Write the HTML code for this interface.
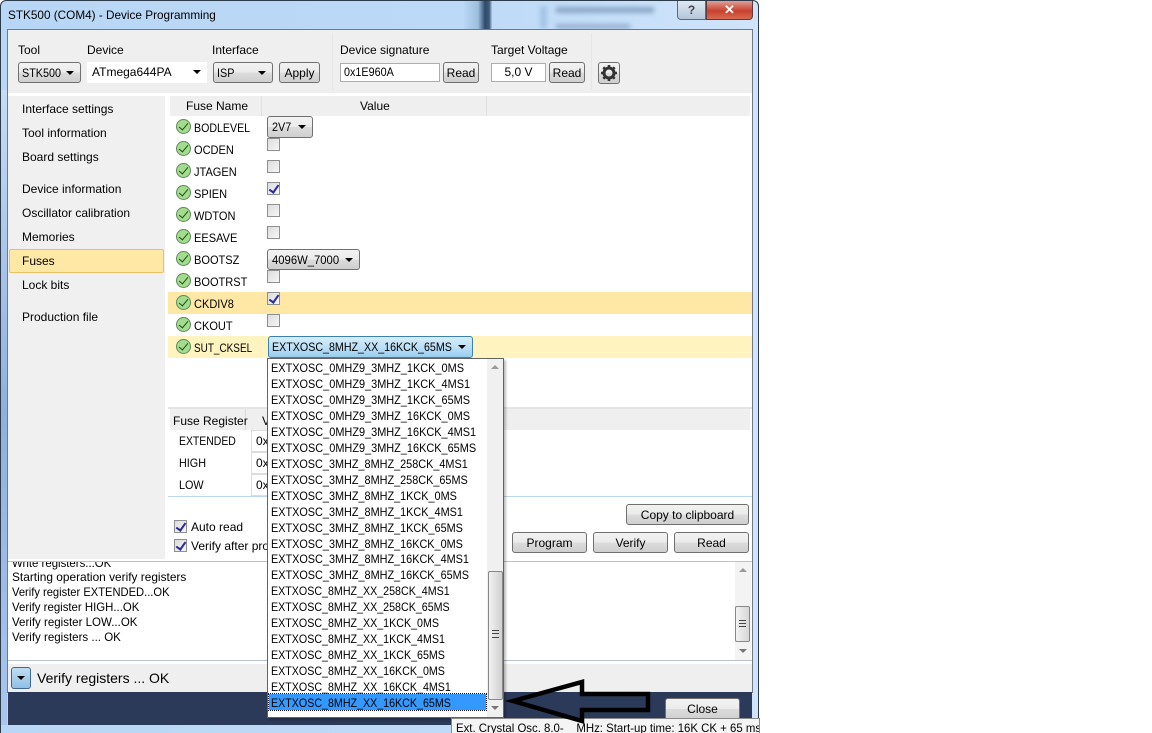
<!DOCTYPE html>
<html><head><meta charset="utf-8"><style>
html,body{margin:0;padding:0;background:#fff;width:1152px;height:733px;overflow:hidden}
*{box-sizing:border-box}
body{position:relative;font:12px/16px "Liberation Sans",sans-serif;color:#000}
.a,.t,.b,.c,.i,.cb{position:absolute}
.t{white-space:nowrap}
.b{border:1px solid #707070;border-radius:3px;background:linear-gradient(#f2f2f2 0,#ebebeb 50%,#dcdcdc 51%,#cfcfcf 100%);text-align:center;white-space:nowrap;line-height:20px}
.dd::after{content:"";position:absolute;right:6px;top:8px;border:4px solid transparent;border-top:4px solid #000;border-bottom:0}
.i{background:#fff;border:1px solid #abadb3;white-space:nowrap;line-height:17px}
.c{width:15px;height:15px;border-radius:50%;background:#a4dc8e;border:1px solid #5c8a5c}
.c::after{content:"";position:absolute;left:4px;top:1px;width:4px;height:8px;border:solid #1c4a1c;border-width:0 1.5px 1.5px 0;transform:rotate(40deg)}
.cb{width:13px;height:13px;border:1px solid #8e8f8f;background:linear-gradient(135deg,#dcdcdc,#f6f6f6)}
.cb.on::after{content:"";position:absolute;left:3px;top:0;width:4px;height:8px;border:solid #2b2b9a;border-width:0 2px 2px 0;transform:rotate(35deg)}
.op{left:3px;position:absolute;white-space:nowrap;line-height:16px;transform:scaleX(.91);transform-origin:0 0}
.op.m3{transform:scaleX(.905)}
.op.m8{transform:scaleX(.89)}
.s{display:inline-block;transform:scaleX(.9);transform-origin:0 0}
.t.s{display:block}
</style></head><body>
<div class="a" style="left:0;top:0;width:759px;height:733px;background:linear-gradient(90deg,#b8d6f5,#bcd9f7 60%,#cfe4fa);border:1px solid #2c3a4a;border-top-left-radius:6px;border-top-right-radius:6px;border-bottom:0"></div>
<div class="a" style="left:1px;top:90px;width:6px;height:640px;background:linear-gradient(#c5dcf5,#8fb0e0 50%,#aac6ee)"></div>
<div class="a" style="left:464px;top:1px;width:28px;height:28px;background:linear-gradient(90deg,#b8d6f5,#9fbfe0 50%,#2f4a6c 75%,#3d5a7a 90%,#b0cdea)"></div>
<div class="a" style="left:540px;top:6px;width:7px;height:22px;background:#a5c4e6;filter:blur(2px)"></div>
<div class="a" style="left:556px;top:7px;width:98px;height:6px;background:#8ba8c8;filter:blur(2.5px)"></div>
<div class="a" style="left:556px;top:24px;width:74px;height:5px;background:#94b0d0;filter:blur(2.5px)"></div>
<div class="t" style="left:8px;top:7px;transform:scaleX(.98);transform-origin:0 0">STK500 (COM4) - Device Programming</div>
<div class="a" style="left:677px;top:1px;width:29px;height:19px;background:linear-gradient(#dfe9f3,#b4c6d8);border:1px solid #5a6a7a;border-top:0;border-radius:0 0 0 4px;text-align:center;line-height:19px;color:#445;font-weight:bold">?</div>
<div class="a" style="left:706px;top:1px;width:47px;height:19px;background:linear-gradient(#e0a095,#c8402e 55%,#d86a50);border:1px solid #5a3a3a;border-top:0;border-radius:0 0 4px 0;text-align:center;line-height:18px;color:#fff;font-weight:bold;font-size:13px">✕</div>

<div class="a" style="left:7px;top:29px;width:746px;height:664px;background:#fff;border:1px solid #6f7a86"></div>
<div class="a" style="left:8px;top:30px;width:744px;height:63px;background:#efefef"></div>
<div class="a" style="left:332px;top:33px;width:1px;height:57px;background:#e6e6e6"></div>
<div class="a" style="left:591px;top:33px;width:1px;height:57px;background:#e6e6e6"></div>

<div class="t" style="left:18px;top:42px">Tool</div>
<div class="t" style="left:87px;top:42px">Device</div>
<div class="t" style="left:212px;top:42px">Interface</div>
<div class="t" style="left:340px;top:42px">Device signature</div>
<div class="t" style="left:491px;top:42px">Target Voltage</div>
<div class="b dd" style="left:18px;top:62px;width:63px;height:21px;text-align:left;padding-left:3px"><span class="s">STK500</span></div>
<div class="a dd" style="left:87px;top:62px;width:120px;height:21px;background:#fff;line-height:20px;padding-left:5px">ATmega644PA</div>
<div class="b dd" style="left:213px;top:62px;width:60px;height:21px;text-align:left;padding-left:3px"><span class="s">ISP</span></div>
<div class="b" style="left:279px;top:62px;width:41px;height:21px">Apply</div>
<div class="i" style="left:340px;top:63px;width:100px;height:19px;padding-left:3px"><span class="s">0x1E960A</span></div>
<div class="b" style="left:443px;top:62px;width:36px;height:21px">Read</div>
<div class="i" style="left:491px;top:63px;width:55px;height:19px;text-align:center">5,0 V</div>
<div class="b" style="left:549px;top:62px;width:36px;height:21px">Read</div>
<div class="b" style="left:598px;top:62px;width:22px;height:22px">
<svg width="20" height="20" viewBox="0 0 20 20" style="position:absolute;left:0;top:0"><circle cx="10" cy="10" r="5" fill="none" stroke="#333" stroke-width="3"/><path d="M10 2v16M2 10h16M4.3 4.3l11.4 11.4M15.7 4.3L4.3 15.7" stroke="#333" stroke-width="2.6" stroke-dasharray="3 10 3 0"/></svg></div>

<div class="a" style="left:8px;top:96px;width:157px;height:463px;background:#f0f0f0"></div>
<div class="t" style="left:22px;top:101px">Interface settings</div>
<div class="t" style="left:22px;top:125px">Tool information</div>
<div class="t" style="left:22px;top:149px">Board settings</div>
<div class="t" style="left:22px;top:181px">Device information</div>
<div class="t" style="left:22px;top:205px">Oscillator calibration</div>
<div class="t" style="left:22px;top:229px">Memories</div>
<div class="a" style="left:9px;top:249px;width:155px;height:24px;background:#ffe8a6;border:1px solid #e5c365;border-radius:2px"></div>
<div class="t" style="left:22px;top:253px">Fuses</div>
<div class="t" style="left:22px;top:277px">Lock bits</div>
<div class="t" style="left:22px;top:309px">Production file</div>

<div class="a" style="left:170px;top:96px;width:580px;height:20px;background:#efefef"></div>
<div class="a" style="left:261px;top:96px;width:1px;height:20px;background:#e0e0e0"></div>
<div class="a" style="left:486px;top:96px;width:1px;height:20px;background:#e0e0e0"></div>
<div class="t" style="left:186px;top:98px">Fuse Name</div>
<div class="t" style="left:360px;top:98px">Value</div>

<div class="a" style="left:168px;top:292px;width:584px;height:22px;background:#ffe8a6"></div>
<div class="a" style="left:168px;top:336px;width:584px;height:22px;background:#fff3c0"></div>

<div class="c" style="left:176px;top:119px"></div><div class="t s" style="left:194px;top:120px;transform:scaleX(.885)">BODLEVEL</div>
<div class="c" style="left:176px;top:141px"></div><div class="t s" style="left:194px;top:142px;transform:scaleX(.92)">OCDEN</div>
<div class="c" style="left:176px;top:163px"></div><div class="t s" style="left:194px;top:164px;transform:scaleX(.92)">JTAGEN</div>
<div class="c" style="left:176px;top:185px"></div><div class="t s" style="left:194px;top:186px;transform:scaleX(.92)">SPIEN</div>
<div class="c" style="left:176px;top:207px"></div><div class="t s" style="left:194px;top:208px;transform:scaleX(.92)">WDTON</div>
<div class="c" style="left:176px;top:229px"></div><div class="t s" style="left:194px;top:230px;transform:scaleX(.92)">EESAVE</div>
<div class="c" style="left:176px;top:251px"></div><div class="t s" style="left:194px;top:252px;transform:scaleX(.92)">BOOTSZ</div>
<div class="c" style="left:176px;top:273px"></div><div class="t s" style="left:194px;top:274px;transform:scaleX(.92)">BOOTRST</div>
<div class="c" style="left:176px;top:295px"></div><div class="t s" style="left:194px;top:296px;transform:scaleX(.92)">CKDIV8</div>
<div class="c" style="left:176px;top:317px"></div><div class="t s" style="left:194px;top:318px;transform:scaleX(.92)">CKOUT</div>
<div class="c" style="left:176px;top:339px"></div><div class="t s" style="left:194px;top:340px;transform:scaleX(.83)">SUT_CKSEL</div>

<div class="b dd" style="left:267px;top:116px;width:46px;height:22px;text-align:left;padding-left:4px"><span class="s">2V7</span></div>
<div class="cb" style="left:267px;top:138px"></div>
<div class="cb" style="left:267px;top:160px"></div>
<div class="cb on" style="left:267px;top:182px"></div>
<div class="cb" style="left:267px;top:204px"></div>
<div class="cb" style="left:267px;top:226px"></div>
<div class="b dd" style="left:267px;top:249px;width:93px;height:21px;text-align:left;padding-left:4px"><span class="s" style="transform:scaleX(.94)">4096W_7000</span></div>
<div class="cb" style="left:267px;top:270px"></div>
<div class="cb on" style="left:267px;top:292px"></div>
<div class="cb" style="left:267px;top:314px"></div>
<div class="b dd" style="left:268px;top:336px;width:205px;height:22px;text-align:left;padding-left:3px;background:linear-gradient(#d6ecfa,#bde0f6 50%,#98cdef);border-color:#3c7fb1"><span class="s" style="transform:scaleX(.89)">EXTXOSC_8MHZ_XX_16KCK_65MS</span></div>

<div class="a" style="left:168px;top:407px;width:584px;height:2px;background:#e4e4e4"></div>
<div class="a" style="left:170px;top:409px;width:580px;height:21px;background:#efefef"></div>
<div class="a" style="left:245px;top:409px;width:1px;height:21px;background:#d8d8d8"></div>
<div class="t" style="left:173px;top:413px">Fuse Register</div>
<div class="t" style="left:262px;top:413px">V</div>
<div class="t s" style="left:179px;top:433px;transform:scaleX(.87)">EXTENDED</div>
<div class="t s" style="left:179px;top:455px">HIGH</div>
<div class="t s" style="left:179px;top:477px">LOW</div>
<div class="i" style="left:251px;top:430px;width:100px;height:22px;padding-left:4px;line-height:21px;border-color:#ddd">0x</div>
<div class="i" style="left:251px;top:452px;width:100px;height:22px;padding-left:4px;line-height:21px;border-color:#ddd">0x</div>
<div class="i" style="left:251px;top:474px;width:100px;height:22px;padding-left:4px;line-height:21px;border-color:#ddd">0x</div>
<div class="a" style="left:168px;top:496px;width:584px;height:1px;background:#bdd6ee"></div>
<div class="cb on" style="left:174px;top:520px"></div>
<div class="t" style="left:191px;top:519px">Auto read</div>
<div class="cb on" style="left:174px;top:539px"></div>
<div class="t" style="left:191px;top:538px">Verify after programming</div>

<div class="b" style="left:626px;top:504px;width:123px;height:21px">Copy to clipboard</div>
<div class="b" style="left:512px;top:532px;width:75px;height:21px">Program</div>
<div class="b" style="left:593px;top:532px;width:75px;height:21px">Verify</div>
<div class="b" style="left:674px;top:532px;width:75px;height:21px">Read</div>

<div class="a" style="left:8px;top:561px;width:744px;height:100px;background:#fff;border-top:1px solid #b8c2cc;border-bottom:1px solid #b8c2cc;overflow:hidden"></div>
<div class="a" style="left:8px;top:562px;width:500px;height:98px;overflow:hidden"><div class="t" style="left:4px;top:-7px;transform:scaleX(.95);transform-origin:0 0">Write registers...OK</div></div>
<div class="t" style="left:12px;top:569px;transform:scaleX(.99);transform-origin:0 0">Starting operation verify registers</div>
<div class="t" style="left:12px;top:584px;transform:scaleX(.93);transform-origin:0 0">Verify register EXTENDED...OK</div>
<div class="t" style="left:12px;top:599px;transform:scaleX(.95);transform-origin:0 0">Verify register HIGH...OK</div>
<div class="t" style="left:12px;top:614px;transform:scaleX(.96);transform-origin:0 0">Verify register LOW...OK</div>
<div class="t" style="left:12px;top:629px;transform:scaleX(.96);transform-origin:0 0">Verify registers ... OK</div>
<div class="a" style="left:735px;top:562px;width:16px;height:98px;background:#f3f3f3"></div>
<div class="a" style="left:739px;top:568px;border:4px solid transparent;border-bottom:4px solid #999;border-top:0"></div>
<div class="a" style="left:739px;top:649px;border:4px solid transparent;border-top:4px solid #777;border-bottom:0"></div>
<div class="a" style="left:735px;top:606px;width:15px;height:36px;border:1px solid #888;border-radius:2px;background:linear-gradient(90deg,#f2f2f2,#d6d6d6)"></div>
<div class="a" style="left:739px;top:620px;width:7px;height:7px;border-top:1px solid #444;border-bottom:1px solid #444"></div>
<div class="a" style="left:739px;top:623px;width:7px;height:1px;background:#444"></div>

<div class="a" style="left:8px;top:664px;width:744px;height:28px;background:#efefef"></div>
<div class="b" style="left:11px;top:667px;width:20px;height:22px;background:linear-gradient(#c0dcf2,#90c0e6);border-color:#3c6a92"></div>
<div class="a" style="left:17px;top:676px;border:4px solid transparent;border-top:4px solid #000;border-bottom:0"></div>
<div class="t" style="left:37px;top:669px;font-size:14px;line-height:18px">Verify registers ... OK</div>
<div class="a" style="left:8px;top:692px;width:744px;height:33px;background:#2a3a58"></div>
<div class="b" style="left:665px;top:698px;width:75px;height:22px">Close</div>
<div class="a" style="left:1px;top:725px;width:757px;height:8px;background:linear-gradient(90deg,#b8d6f5,#c4dcf6)"></div>

<div class="a" style="left:267px;top:358px;width:237px;height:360px;background:#fff;border:1px solid #646464;box-shadow:2px 2px 2px rgba(0,0,0,.25);overflow:hidden">
<div class="a" style="left:219px;top:0;width:17px;height:358px;background:#f0f0f0"></div>
<div class="a" style="left:223px;top:6px;border:4px solid transparent;border-bottom:4px solid #999;border-top:0"></div>
<div class="a" style="left:223px;top:347px;border:4px solid transparent;border-top:4px solid #777;border-bottom:0"></div>
<div class="a" style="left:220px;top:212px;width:15px;height:129px;border:1px solid #888;border-radius:2px;background:linear-gradient(90deg,#f2f2f2,#d0d0d0)"></div>
<div class="a" style="left:224px;top:271px;width:7px;height:8px;border-top:1px solid #444;border-bottom:1px solid #444"></div>
<div class="a" style="left:224px;top:274px;width:7px;height:1px;background:#444"></div>
<div class="a" style="left:1px;top:335px;width:217px;height:16px;background:#3399ff;outline:1px dotted #114"></div>
<div class="op" style="top:1px">EXTXOSC_0MHZ9_3MHZ_1KCK_0MS</div>
<div class="op" style="top:17px">EXTXOSC_0MHZ9_3MHZ_1KCK_4MS1</div>
<div class="op" style="top:33px">EXTXOSC_0MHZ9_3MHZ_1KCK_65MS</div>
<div class="op" style="top:49px">EXTXOSC_0MHZ9_3MHZ_16KCK_0MS</div>
<div class="op" style="top:65px">EXTXOSC_0MHZ9_3MHZ_16KCK_4MS1</div>
<div class="op" style="top:81px">EXTXOSC_0MHZ9_3MHZ_16KCK_65MS</div>
<div class="op m3" style="top:97px">EXTXOSC_3MHZ_8MHZ_258CK_4MS1</div>
<div class="op m3" style="top:113px">EXTXOSC_3MHZ_8MHZ_258CK_65MS</div>
<div class="op m3" style="top:129px">EXTXOSC_3MHZ_8MHZ_1KCK_0MS</div>
<div class="op m3" style="top:145px">EXTXOSC_3MHZ_8MHZ_1KCK_4MS1</div>
<div class="op m3" style="top:161px">EXTXOSC_3MHZ_8MHZ_1KCK_65MS</div>
<div class="op m3" style="top:177px">EXTXOSC_3MHZ_8MHZ_16KCK_0MS</div>
<div class="op m3" style="top:192px">EXTXOSC_3MHZ_8MHZ_16KCK_4MS1</div>
<div class="op m3" style="top:208px">EXTXOSC_3MHZ_8MHZ_16KCK_65MS</div>
<div class="op m8" style="top:224px">EXTXOSC_8MHZ_XX_258CK_4MS1</div>
<div class="op m8" style="top:240px">EXTXOSC_8MHZ_XX_258CK_65MS</div>
<div class="op m8" style="top:256px">EXTXOSC_8MHZ_XX_1KCK_0MS</div>
<div class="op m8" style="top:272px">EXTXOSC_8MHZ_XX_1KCK_4MS1</div>
<div class="op m8" style="top:288px">EXTXOSC_8MHZ_XX_1KCK_65MS</div>
<div class="op m8" style="top:304px">EXTXOSC_8MHZ_XX_16KCK_0MS</div>
<div class="op m8" style="top:320px">EXTXOSC_8MHZ_XX_16KCK_4MS1</div>
<div class="op m8" style="top:336px">EXTXOSC_8MHZ_XX_16KCK_65MS</div>
</div>

<div class="a" style="left:451px;top:718px;width:309px;height:15px;background:#f4f4f4;border:1px solid #8a8a8a;border-bottom:0;overflow:hidden"><div class="t" style="left:4px;top:1px;transform:scaleX(.95);transform-origin:0 0">Ext. Crystal Osc. 8.0-&nbsp;&nbsp;&nbsp;&nbsp;MHz: Start-up time: 16K CK + 65 ms</div></div>

<svg class="a" style="left:500px;top:670px" width="160" height="60" viewBox="0 0 160 60"><path d="M13 31L82 12V24H148V40H82V51Z" fill="none" stroke="#000" stroke-width="4.5" stroke-linejoin="miter"/></svg>
</body></html>
